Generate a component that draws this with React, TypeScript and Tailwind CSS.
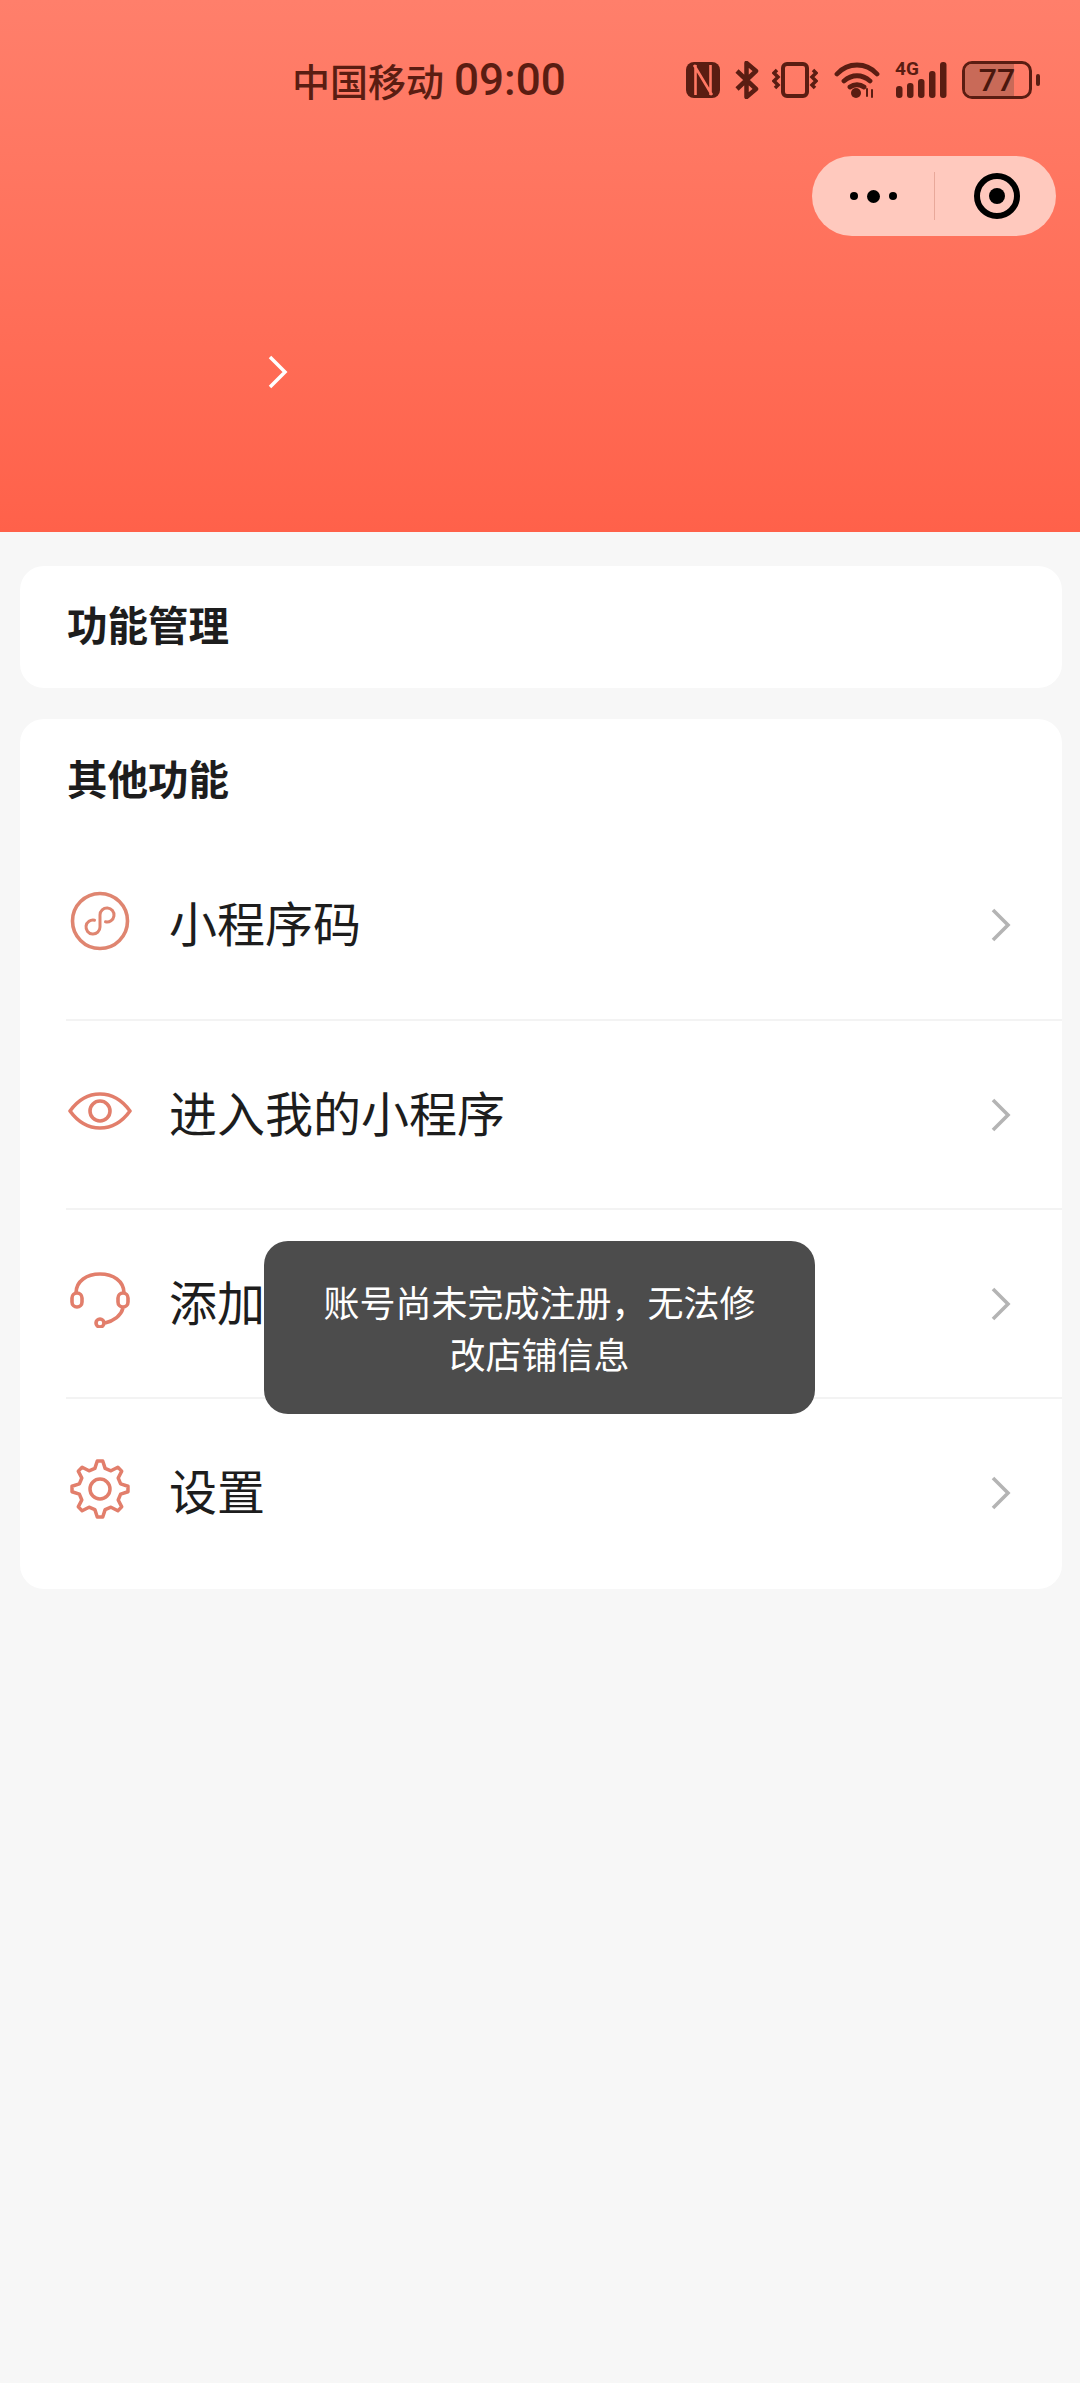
const font = '[font-family:"Noto_Sans_CJK_SC","Liberation_Sans",sans-serif]'

function gearPath() {
  const cx = 24, cy = 24, teeth = 8
  const pts: string[] = []
  for (let i = 0; i < teeth; i++) {
    const a = (i / teeth) * Math.PI * 2 - Math.PI / 2
    const step = Math.PI * 2 / teeth
    const list: [number, number][] = [[17, -0.5], [22.5, -0.2], [22.5, 0.2], [17, 0.5]]
    list.forEach(([r, f]) => {
      const t = a + f * step * 0.62
      pts.push(`${(cx + r * Math.cos(t)).toFixed(2)} ${(cy + r * Math.sin(t)).toFixed(2)}`)
    })
  }
  return `M${pts.join('L')}Z`
}

const MiniIcon = () => <svg width="60" height="60" viewBox="0 0 60 60" fill="none" stroke="#df8570" strokeWidth="3.6">
  <circle cx="30" cy="30" r="27.5" />
  <path d="M35.5 30.8A7 7 0 1 0 30 24V36A7 7 0 1 1 24.5 29.2" strokeWidth="3" strokeLinecap="round" />
</svg>

const EyeIcon = () => <svg width="64" height="38" viewBox="0 0 64 38" fill="none" stroke="#e27e6b" strokeWidth="3.6">
  <path d="M2 19C10 8 20 2 32 2s22 6 30 17c-8 11-18 17-30 17S10 30 2 19Z" strokeLinejoin="round" />
  <circle cx="32" cy="19" r="10" />
</svg>

const HeadsetIcon = () => <svg width="60" height="56" viewBox="0 0 60 56" fill="none" stroke="#e27e6b" strokeWidth="3.6">
  <path d="M6 21C6 9 17 2 30 2s24 7 24 19" />
  <rect x="2" y="21" width="10" height="14" rx="5" />
  <rect x="48" y="21" width="10" height="14" rx="5" />
  <path d="M53 36c-2 8-10 13-18 15" />
  <circle cx="30" cy="51" r="4" />
</svg>

const GearIcon = () => <svg width="60" height="60" viewBox="0 0 48 48" fill="none" stroke="#e27e6b" strokeWidth="2.8" strokeLinejoin="round">
  <path d={gearPath()} />
  <circle cx="24" cy="24" r="8" />
</svg>

const Chevron = () => <svg width="20" height="34" viewBox="0 0 20 34" fill="none" stroke="#b4b4b4" strokeWidth="3.6">
  <path d="M2 2l15 15L2 32" />
</svg>

function StatusIcons() {
  const c = '#5a1d12'
  return <div className="flex items-center ml-auto">
    <svg width="34" height="36" viewBox="0 0 34 36" className="mr-[14px]" fill={c}>
      <rect x="0" y="0" width="34" height="36" rx="8" />
      <path d="M9.5 3v30M24.5 3v30M8 3l18 30" stroke="#ff7863" strokeWidth="2.6" fill="none" />
    </svg>
    <svg width="25" height="38" viewBox="0 0 25 38" className="mr-[13px]" fill="none" stroke={c} strokeWidth="4.5" strokeLinejoin="round">
      <path d="M3 10l19 18-9.5 8V2L22 10 3 28" />
    </svg>
    <svg width="46" height="36" viewBox="0 0 46 36" className="mr-[16px]" fill="none" stroke={c} strokeWidth="3.5">
      <rect x="11" y="2" width="24" height="32" rx="4" strokeWidth="4" />
      <path d="M5 8l-3 3 4 4-4 4 4 4-3 3M41 8l3 3-4 4 4 4-4 4 3 3" />
    </svg>
    <svg width="46" height="36" viewBox="0 0 46 36" className="mr-[15px]" fill="none" stroke={c} strokeWidth="4.8" strokeLinecap="round">
      <path d="M3 12C14 0 32 0 43 12M10 19c8-7 18-7 26 0M16 25c4-3 10-3 14 0" />
      <circle cx="22" cy="31" r="5" fill={c} stroke="none" />
      <path d="M33 27v7M38 28v7" strokeWidth="2" />
    </svg>
    <div className="relative w-[52px] h-[36px] mr-[15px]">
      <span className="absolute left-0 top-[-3px] text-[19px] leading-[20px] font-bold text-[#5a1d12] font-['Roboto']">4G</span>
      <svg width="52" height="36" viewBox="0 0 52 36" fill={c} className="absolute inset-0">
        <rect x="1" y="24" width="6.5" height="12" rx="3" />
        <rect x="12" y="21" width="6.5" height="15" rx="3" />
        <rect x="23" y="17" width="6.5" height="19" rx="3" />
        <rect x="34" y="9" width="6.5" height="27" rx="3" />
        <rect x="45" y="0" width="6.5" height="36" rx="3" />
      </svg>
    </div>
    <div className="relative w-[70px] h-[38px] rounded-[10px] border-[3px] border-[#5a1d12] overflow-hidden flex items-center justify-center">
      <div className="absolute left-0 top-0 bottom-0 w-[77%] bg-[#c96a58]" />
      <span className="relative text-[32px] leading-none font-medium text-[#4a170e] font-['Roboto']">77</span>
    </div>
    <div className="w-[4px] h-[12px] rounded-sm bg-[#5a1d12] ml-[4px]" />
  </div>
}

function Row({ icon, label, border }: { icon: React.ReactNode; label: string; border?: boolean }) {
  return <div className={`h-[189px] ml-[46px] flex items-center ${border ? 'border-t-2 border-[#f3f3f3]' : ''}`}>
    <div className="w-[66px] ml-[1px] mb-[8px] flex justify-center shrink-0">{icon}</div>
    <span className="ml-[36px] pb-[8px] text-[48px] leading-none text-[#1d1d1d]">{label}</span>
    <div className="ml-auto mr-[51px]"><Chevron /></div>
  </div>
}

export default function App() {
  return <div className={`relative w-[1080px] h-[2400px] bg-white flex flex-col overflow-hidden ${font}`}>
    <div className="h-[532px] shrink-0 bg-gradient-to-b from-[#ff7f6b] to-[#ff614a]">
      <div className="flex items-center h-[80px] mt-[40px] pl-[292px] pr-[40px]">
        <span className="text-[38px] leading-none font-medium text-[#5a1d12]">中国移动</span>
        <span className="ml-[10px] text-[44px] leading-none font-medium text-[#5a1d12] font-['Roboto']">09:00</span>
        <StatusIcons />
      </div>
    </div>
    <div className="flex-1 bg-[#f7f7f7] pl-[20px] pr-[18px] pt-[34px]">
      <div className="h-[122px] bg-white rounded-[24px] pl-[47px] pb-[6px] flex items-center">
        <h2 className="text-[40.5px] leading-none font-bold text-[#1d1d1d]">功能管理</h2>
      </div>
      <div className="mt-[31px] bg-white rounded-[24px] pb-[3px]">
        <div className="h-[111px] pl-[47px] pt-[8px] flex items-center">
          <h2 className="text-[40.5px] leading-none font-bold text-[#1d1d1d]">其他功能</h2>
        </div>
        <Row icon={<MiniIcon />} label="小程序码" />
        <Row icon={<EyeIcon />} label="进入我的小程序" border />
        <Row icon={<HeadsetIcon />} label="添加" border />
        <Row icon={<GearIcon />} label="设置" border />
      </div>
    </div>
    <div className="h-[17px] shrink-0 bg-white" />
    <div className="absolute left-[812px] top-[156px] w-[244px] h-[80px] rounded-[40px] bg-[#ffc9be] flex items-center">
      <div className="w-[122px] flex items-center justify-center gap-[9px]">
        <span className="w-[8px] h-[8px] rounded-full bg-black" />
        <span className="w-[13px] h-[13px] rounded-full bg-black" />
        <span className="w-[8px] h-[8px] rounded-full bg-black" />
      </div>
      <div className="w-px h-[48px] bg-[#e8a89a]" />
      <div className="flex-1 flex justify-center pl-[2px]">
        <div className="w-[46px] h-[46px] rounded-full border-[6px] border-black flex items-center justify-center">
          <span className="w-[16px] h-[16px] rounded-full bg-black" />
        </div>
      </div>
    </div>
    <svg width="22" height="34" viewBox="0 0 22 34" fill="none" stroke="#fff" strokeWidth="3.5" className="absolute left-[267px] top-[355px]">
      <path d="M3 2l15 15L3 32" />
    </svg>
    <div className="absolute left-[264px] top-[1241px] w-[551px] h-[173px] rounded-[24px] bg-[#4c4c4c] px-[48px] pt-[34px] text-center text-[36px] leading-[52px] text-white">
      账号尚未完成注册，无法修改店铺信息
    </div>
  </div>
}
